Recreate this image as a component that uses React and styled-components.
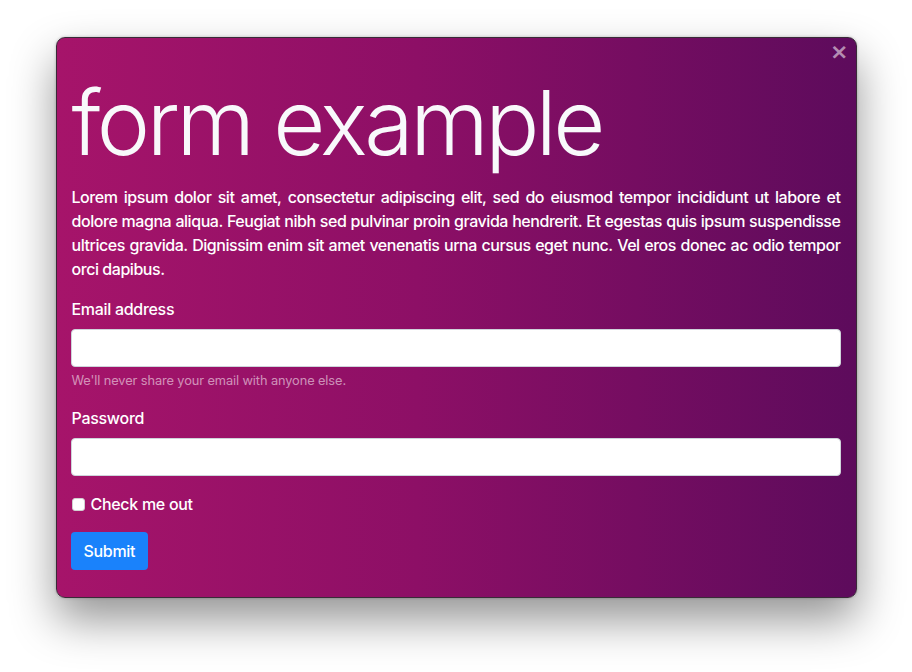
import React from "react";
import styled, { createGlobalStyle } from "styled-components";

const Global = createGlobalStyle`
  html, body { margin: 0; padding: 0; background: #ffffff; }
  body { font-family: Inter, "Noto Sans", "Liberation Sans", sans-serif; }
  * { box-sizing: border-box; }
`;

const Page = styled.div`
  width: 912px;
  height: 672px;
  display: flex;
  justify-content: center;
  align-items: flex-start;
  padding-top: 37px;
`;

const Window = styled.div`
  position: relative;
  width: 801px;
  height: 561px;
  border-radius: 9px;
  border: 1px solid #3a2a38;
  background: linear-gradient(90deg, #a6146a 0%, #8d0f66 45%, #5d0b5c 100%);
  box-shadow: 0 22px 45px rgba(0, 0, 0, 0.42), 0 0 3px rgba(0, 0, 0, 0.25);
  padding: 16px 15px 28px 14px;
  color: #ffffff;
  overflow: hidden;
`;

const Close = styled.button`
  position: absolute;
  top: 3px;
  right: 7px;
  background: none;
  border: 0;
  padding: 0;
  color: rgba(255, 255, 255, 0.55);
  font-family: "DejaVu Sans", sans-serif;
  font-size: 22px;
  font-weight: 700;
  line-height: 1;
  cursor: pointer;
`;

const Title = styled.h1`
  margin: 15px 0 8px 1px;
  font-size: 90px;
  font-weight: 300;
  line-height: 1.2;
  letter-spacing: -3.5px;
  color: #f8f9fb;
`;

const Lead = styled.p`
  margin: 0 0 16px 1px;
  font-size: 16px;
  line-height: 24px;
  text-align: justify;
  font-weight: 500;
  letter-spacing: -0.45px;
`;

const Group = styled.div`
  margin-bottom: 16px;
  display: flex;
  flex-direction: column;
`;

const Label = styled.label`
  font-size: 16px;
  line-height: 24px;
  margin: 0 0 8px 1px;
  font-weight: 500;
  letter-spacing: -0.3px;
`;

const Input = styled.input`
  height: 38px;
  width: 100%;
  border: 1px solid #ced4da;
  border-radius: 4px;
  background: #ffffff;
  padding: 6px 12px;
  font-size: 16px;
  outline: none;
`;

const Help = styled.small`
  margin: 4px 0 0 1px;
  font-size: 12.8px;
  line-height: 19px;
  color: rgba(255, 255, 255, 0.55);
  letter-spacing: -0.1px;
`;

const CheckRow = styled.div`
  display: flex;
  align-items: center;
  gap: 6px;
  margin-bottom: 16px;
  font-size: 16px;
  line-height: 24px;
  font-weight: 500;
  letter-spacing: -0.3px;
`;

const Box = styled.span`
  width: 13px;
  height: 13px;
  border-radius: 3px;
  background: #ffffff;
  border: 1px solid #d0d0d0;
  display: inline-block;
  margin-left: 1px;
`;

const Button = styled.button`
  align-self: flex-start;
  height: 38px;
  padding: 0 13px;
  border: 0;
  border-radius: 4px;
  background: #1a82fb;
  color: #ffffff;
  font-family: inherit;
  font-size: 16px;
  font-weight: 500;
  letter-spacing: -0.3px;
`;

export default function App() {
  return (
    <Page>
      <Global />
      <Window>
        <Close aria-label="Close">×</Close>
        <Title>form example</Title>
        <Lead>
          Lorem ipsum dolor sit amet, consectetur adipiscing elit, sed do eiusmod tempor incididunt ut labore et
          dolore magna aliqua. Feugiat nibh sed pulvinar proin gravida hendrerit. Et egestas quis ipsum suspendisse
          ultrices gravida. Dignissim enim sit amet venenatis urna cursus eget nunc. Vel eros donec ac odio tempor
          orci dapibus.
        </Lead>
        <Group>
          <Label>Email address</Label>
          <Input type="email" />
          <Help>We'll never share your email with anyone else.</Help>
        </Group>
        <Group>
          <Label>Password</Label>
          <Input type="password" />
        </Group>
        <CheckRow>
          <Box />
          <span>Check me out</span>
        </CheckRow>
        <Button>Submit</Button>
      </Window>
    </Page>
  );
}
